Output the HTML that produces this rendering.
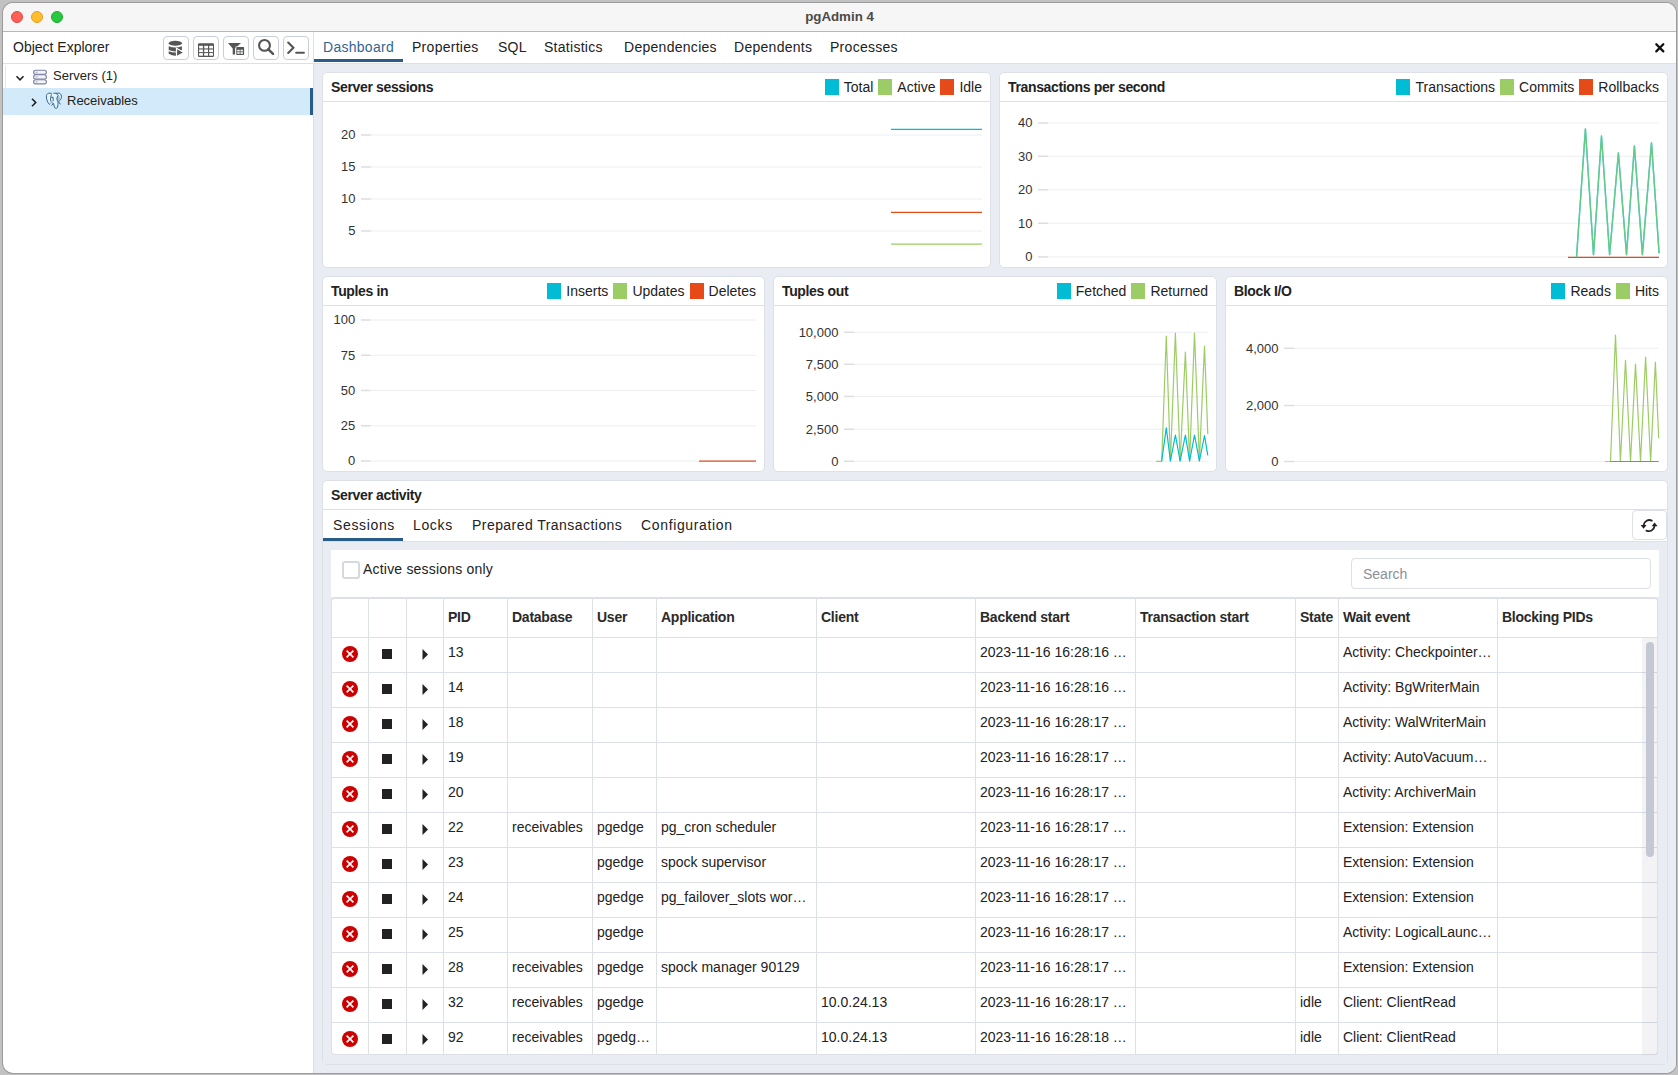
<!DOCTYPE html><html><head><meta charset="utf-8"><title>pgAdmin 4</title><style>
*{box-sizing:border-box;margin:0;padding:0}
html,body{width:1678px;height:1075px;overflow:hidden;background:#c2c2c2;font-family:"Liberation Sans",sans-serif;color:#222}
.a{position:absolute}
#win{position:absolute;left:3px;top:3px;width:1673px;height:1070px;border-radius:10px;overflow:hidden;background:#fff;box-shadow:0 0 0 1px rgba(0,0,0,0.2)}
#title{position:absolute;left:0;top:0;width:1673px;height:29px;background:#f6f6f6;border-bottom:1px solid #b4b7be}
.tl{position:absolute;top:7px;width:13px;height:13px;border-radius:50%}
#ttext{position:absolute;left:0;width:1673px;top:6px;text-align:center;font-weight:bold;font-size:13.5px;color:#4a4a4a;line-height:16px}
.t14{font-size:14px;line-height:16px;white-space:nowrap}
.tbtn{position:absolute;top:36px;width:26px;height:24px;border:1px solid #c8cdd8;border-radius:4px;background:#fff}
.card{position:absolute;background:#fff;border:1px solid #dde0e6;border-radius:5px;overflow:hidden}
.chead{position:absolute;left:0;top:0;right:0;height:29px;border-bottom:1px solid #dde0e6}
.ctitle{position:absolute;left:8px;top:6px;font-weight:bold;font-size:14px;line-height:16px;white-space:nowrap;letter-spacing:-0.35px}
.legend{position:absolute;right:8px;top:6px;height:16px;font-size:14px;line-height:16px;white-space:nowrap;display:flex}
.sw{width:14px;height:16px;margin-right:5px}
.lt{margin-right:5px}
.lt:last-child{margin-right:0}
.tab{position:absolute;font-size:14px;line-height:16px;white-space:nowrap;letter-spacing:0.15px}
.cell{position:absolute;font-size:14px;line-height:16px;white-space:nowrap}
.hd{font-weight:bold;letter-spacing:-0.25px;color:#2a2a2a}
</style></head><body>
<div id="win"><div class="a" style="left:-3px;top:-3px;width:1678px;height:1075px">
<div class="a" style="left:3px;top:3px;width:1673px;height:29px;background:#f6f6f6;border-bottom:1px solid #b4b7be"></div>
<div class="tl" style="left:11px;top:11px;width:12px;height:12px;background:#fe5f57;border:1px solid #e0443e"></div>
<div class="tl" style="left:31px;top:11px;width:12px;height:12px;background:#febc2e;border:1px solid #dea123"></div>
<div class="tl" style="left:51px;top:11px;width:12px;height:12px;background:#28c840;border:1px solid #1aab29"></div>
<div class="a" style="left:3px;width:1673px;top:9px;text-align:center;font-weight:bold;font-size:13.3px;color:#4a4a4a;line-height:16px">pgAdmin 4</div>
<div class="a" style="left:313px;top:32px;width:1px;height:1043px;background:#dde0e6"></div>
<div class="a" style="left:3px;top:63px;width:310px;height:1px;background:#dde0e6"></div>
<div class="a t14" style="left:13px;top:39px">Object Explorer</div>
<div class="tbtn" style="left:163px"></div>
<div class="tbtn" style="left:193px"></div>
<div class="tbtn" style="left:223px"></div>
<div class="tbtn" style="left:253px"></div>
<div class="tbtn" style="left:283px"></div>
<div class="a" style="left:5px;top:66px;width:1px;height:22px;background:#e3e5ea"></div>
<div class="a" style="left:3px;top:88px;width:310px;height:27px;background:#d2eafa"></div>
<div class="a" style="left:310px;top:88px;width:3px;height:27px;background:#2a5c8a"></div>
<div class="a" style="left:19px;top:90px;width:1px;height:24px;background:#e0e6ec"></div>
<div class="a t14" style="left:53px;top:68px;font-size:13px">Servers (1)</div>
<div class="a t14" style="left:67px;top:93px;font-size:13px">Receivables</div>
<div class="a" style="left:314px;top:63px;width:1362px;height:1px;background:#dde0e6"></div>
<div class="tab" style="left:323px;top:39px;color:#326690;letter-spacing:0.28px">Dashboard</div>
<div class="tab" style="left:412px;top:39px;color:#222;letter-spacing:0.28px">Properties</div>
<div class="tab" style="left:498px;top:39px;color:#222;letter-spacing:0.28px">SQL</div>
<div class="tab" style="left:544px;top:39px;color:#222;letter-spacing:0.28px">Statistics</div>
<div class="tab" style="left:624px;top:39px;color:#222;letter-spacing:0.28px">Dependencies</div>
<div class="tab" style="left:734px;top:39px;color:#222;letter-spacing:0.28px">Dependents</div>
<div class="tab" style="left:830px;top:39px;color:#222;letter-spacing:0.28px">Processes</div>
<div class="a" style="left:314px;top:59px;width:89px;height:3px;background:#2a5c8a"></div>
<div class="a" style="left:314px;top:64px;width:1362px;height:1011px;background:#e9ecf2"></div>
<div class="card" style="left:322px;top:72px;width:669px;height:196px">
<div class="chead"><div class="ctitle">Server sessions</div>
<div class="legend">
<span class="sw" style="background:#00bcd4"></span><span class="lt">Total</span>
<span class="sw" style="background:#9ccc65"></span><span class="lt">Active</span>
<span class="sw" style="background:#e64a19"></span><span class="lt">Idle</span>
</div>
</div></div>
<div class="card" style="left:999px;top:72px;width:669px;height:196px">
<div class="chead"><div class="ctitle">Transactions per second</div>
<div class="legend">
<span class="sw" style="background:#00bcd4"></span><span class="lt">Transactions</span>
<span class="sw" style="background:#9ccc65"></span><span class="lt">Commits</span>
<span class="sw" style="background:#e64a19"></span><span class="lt">Rollbacks</span>
</div>
</div></div>
<div class="card" style="left:322px;top:276px;width:443px;height:196px">
<div class="chead"><div class="ctitle">Tuples in</div>
<div class="legend">
<span class="sw" style="background:#00bcd4"></span><span class="lt">Inserts</span>
<span class="sw" style="background:#9ccc65"></span><span class="lt">Updates</span>
<span class="sw" style="background:#e64a19"></span><span class="lt">Deletes</span>
</div>
</div></div>
<div class="card" style="left:773px;top:276px;width:444px;height:196px">
<div class="chead"><div class="ctitle">Tuples out</div>
<div class="legend">
<span class="sw" style="background:#00bcd4"></span><span class="lt">Fetched</span>
<span class="sw" style="background:#9ccc65"></span><span class="lt">Returned</span>
</div>
</div></div>
<div class="card" style="left:1225px;top:276px;width:443px;height:196px">
<div class="chead"><div class="ctitle">Block I/O</div>
<div class="legend">
<span class="sw" style="background:#00bcd4"></span><span class="lt">Reads</span>
<span class="sw" style="background:#9ccc65"></span><span class="lt">Hits</span>
</div>
</div></div>
<div class="card" style="left:322px;top:480px;width:1346px;height:585px">
<div class="chead"><div class="ctitle">Server activity</div>
</div></div>
<div class="a" style="left:323px;top:510px;width:1344px;height:32px;background:#fff;border-bottom:1px solid #dde0e6"></div>
<div class="a" style="left:323px;top:542px;width:1344px;height:522px;background:#e9ecf2"></div>
<div class="tab" style="left:333px;top:517px;letter-spacing:0.65px">Sessions</div>
<div class="tab" style="left:413px;top:517px;letter-spacing:0.65px">Locks</div>
<div class="tab" style="left:472px;top:517px;letter-spacing:0.45px">Prepared Transactions</div>
<div class="tab" style="left:641px;top:517px;letter-spacing:0.65px">Configuration</div>
<div class="a" style="left:323px;top:538px;width:80px;height:3px;background:#2a5c8a"></div>
<div class="a" style="left:1632px;top:510px;width:35px;height:30px;border:1px solid #dde0e6;border-radius:4px;background:#fff"></div>
<div class="a" style="left:331px;top:550px;width:1328px;height:47px;background:#fff"></div>
<div class="a" style="left:342px;top:561px;width:18px;height:18px;border:2px solid #d4d8df;border-radius:3px"></div>
<div class="a t14" style="left:363px;top:561px;letter-spacing:0.2px">Active sessions only</div>
<div class="a" style="left:1351px;top:558px;width:300px;height:31px;border:1px solid #dde0e6;border-radius:4px;background:#fff"></div>
<div class="a t14" style="left:1363px;top:566px;color:#8a8f99">Search</div>
<div class="a" style="left:331px;top:597px;width:1327px;height:458px;border:1px solid #dde0e6;border-top:2px solid #dde0e6;border-radius:4px 4px 4px 4px;overflow:hidden;background:#fff">
</div>
<div class="a" style="left:368px;top:598px;width:1px;height:457px;background:#dde0e6"></div>
<div class="a" style="left:406px;top:598px;width:1px;height:457px;background:#dde0e6"></div>
<div class="a" style="left:443px;top:598px;width:1px;height:457px;background:#dde0e6"></div>
<div class="a" style="left:507px;top:598px;width:1px;height:457px;background:#dde0e6"></div>
<div class="a" style="left:592px;top:598px;width:1px;height:457px;background:#dde0e6"></div>
<div class="a" style="left:656px;top:598px;width:1px;height:457px;background:#dde0e6"></div>
<div class="a" style="left:816px;top:598px;width:1px;height:457px;background:#dde0e6"></div>
<div class="a" style="left:975px;top:598px;width:1px;height:457px;background:#dde0e6"></div>
<div class="a" style="left:1135px;top:598px;width:1px;height:457px;background:#dde0e6"></div>
<div class="a" style="left:1295px;top:598px;width:1px;height:457px;background:#dde0e6"></div>
<div class="a" style="left:1338px;top:598px;width:1px;height:457px;background:#dde0e6"></div>
<div class="a" style="left:1497px;top:598px;width:1px;height:457px;background:#dde0e6"></div>
<div class="a" style="left:332px;top:637px;width:1325px;height:1px;background:#dde0e6"></div>
<div class="a" style="left:332px;top:672px;width:1325px;height:1px;background:#dde0e6"></div>
<div class="a" style="left:332px;top:707px;width:1325px;height:1px;background:#dde0e6"></div>
<div class="a" style="left:332px;top:742px;width:1325px;height:1px;background:#dde0e6"></div>
<div class="a" style="left:332px;top:777px;width:1325px;height:1px;background:#dde0e6"></div>
<div class="a" style="left:332px;top:812px;width:1325px;height:1px;background:#dde0e6"></div>
<div class="a" style="left:332px;top:847px;width:1325px;height:1px;background:#dde0e6"></div>
<div class="a" style="left:332px;top:882px;width:1325px;height:1px;background:#dde0e6"></div>
<div class="a" style="left:332px;top:917px;width:1325px;height:1px;background:#dde0e6"></div>
<div class="a" style="left:332px;top:952px;width:1325px;height:1px;background:#dde0e6"></div>
<div class="a" style="left:332px;top:987px;width:1325px;height:1px;background:#dde0e6"></div>
<div class="a" style="left:332px;top:1022px;width:1325px;height:1px;background:#dde0e6"></div>
<div class="cell hd" style="left:448px;top:609px">PID</div>
<div class="cell hd" style="left:512px;top:609px">Database</div>
<div class="cell hd" style="left:597px;top:609px">User</div>
<div class="cell hd" style="left:661px;top:609px">Application</div>
<div class="cell hd" style="left:821px;top:609px">Client</div>
<div class="cell hd" style="left:980px;top:609px">Backend start</div>
<div class="cell hd" style="left:1140px;top:609px">Transaction start</div>
<div class="cell hd" style="left:1300px;top:609px">State</div>
<div class="cell hd" style="left:1343px;top:609px">Wait event</div>
<div class="cell hd" style="left:1502px;top:609px">Blocking PIDs</div>
<div class="a" style="left:342px;top:646px;width:16px;height:16px;border-radius:50%;background:#cc0000"></div>
<svg class="a" style="left:342px;top:646px" width="16" height="16"><path d="M4.6 4.6L11.4 11.4M11.4 4.6L4.6 11.4" stroke="#fff" stroke-width="1.6"/></svg>
<div class="a" style="left:382px;top:649px;width:10px;height:10px;background:#222"></div>
<svg class="a" style="left:422px;top:649px" width="7" height="11"><path d="M0.5 0L6 5.5L0.5 11Z" fill="#222"/></svg>
<div class="cell" style="left:448px;top:644px">13</div>
<div class="cell" style="left:980px;top:644px">2023-11-16 16:28:16 …</div>
<div class="cell" style="left:1343px;top:644px">Activity: Checkpointer…</div>
<div class="a" style="left:342px;top:681px;width:16px;height:16px;border-radius:50%;background:#cc0000"></div>
<svg class="a" style="left:342px;top:681px" width="16" height="16"><path d="M4.6 4.6L11.4 11.4M11.4 4.6L4.6 11.4" stroke="#fff" stroke-width="1.6"/></svg>
<div class="a" style="left:382px;top:684px;width:10px;height:10px;background:#222"></div>
<svg class="a" style="left:422px;top:684px" width="7" height="11"><path d="M0.5 0L6 5.5L0.5 11Z" fill="#222"/></svg>
<div class="cell" style="left:448px;top:679px">14</div>
<div class="cell" style="left:980px;top:679px">2023-11-16 16:28:16 …</div>
<div class="cell" style="left:1343px;top:679px">Activity: BgWriterMain</div>
<div class="a" style="left:342px;top:716px;width:16px;height:16px;border-radius:50%;background:#cc0000"></div>
<svg class="a" style="left:342px;top:716px" width="16" height="16"><path d="M4.6 4.6L11.4 11.4M11.4 4.6L4.6 11.4" stroke="#fff" stroke-width="1.6"/></svg>
<div class="a" style="left:382px;top:719px;width:10px;height:10px;background:#222"></div>
<svg class="a" style="left:422px;top:719px" width="7" height="11"><path d="M0.5 0L6 5.5L0.5 11Z" fill="#222"/></svg>
<div class="cell" style="left:448px;top:714px">18</div>
<div class="cell" style="left:980px;top:714px">2023-11-16 16:28:17 …</div>
<div class="cell" style="left:1343px;top:714px">Activity: WalWriterMain</div>
<div class="a" style="left:342px;top:751px;width:16px;height:16px;border-radius:50%;background:#cc0000"></div>
<svg class="a" style="left:342px;top:751px" width="16" height="16"><path d="M4.6 4.6L11.4 11.4M11.4 4.6L4.6 11.4" stroke="#fff" stroke-width="1.6"/></svg>
<div class="a" style="left:382px;top:754px;width:10px;height:10px;background:#222"></div>
<svg class="a" style="left:422px;top:754px" width="7" height="11"><path d="M0.5 0L6 5.5L0.5 11Z" fill="#222"/></svg>
<div class="cell" style="left:448px;top:749px">19</div>
<div class="cell" style="left:980px;top:749px">2023-11-16 16:28:17 …</div>
<div class="cell" style="left:1343px;top:749px">Activity: AutoVacuum…</div>
<div class="a" style="left:342px;top:786px;width:16px;height:16px;border-radius:50%;background:#cc0000"></div>
<svg class="a" style="left:342px;top:786px" width="16" height="16"><path d="M4.6 4.6L11.4 11.4M11.4 4.6L4.6 11.4" stroke="#fff" stroke-width="1.6"/></svg>
<div class="a" style="left:382px;top:789px;width:10px;height:10px;background:#222"></div>
<svg class="a" style="left:422px;top:789px" width="7" height="11"><path d="M0.5 0L6 5.5L0.5 11Z" fill="#222"/></svg>
<div class="cell" style="left:448px;top:784px">20</div>
<div class="cell" style="left:980px;top:784px">2023-11-16 16:28:17 …</div>
<div class="cell" style="left:1343px;top:784px">Activity: ArchiverMain</div>
<div class="a" style="left:342px;top:821px;width:16px;height:16px;border-radius:50%;background:#cc0000"></div>
<svg class="a" style="left:342px;top:821px" width="16" height="16"><path d="M4.6 4.6L11.4 11.4M11.4 4.6L4.6 11.4" stroke="#fff" stroke-width="1.6"/></svg>
<div class="a" style="left:382px;top:824px;width:10px;height:10px;background:#222"></div>
<svg class="a" style="left:422px;top:824px" width="7" height="11"><path d="M0.5 0L6 5.5L0.5 11Z" fill="#222"/></svg>
<div class="cell" style="left:448px;top:819px">22</div>
<div class="cell" style="left:512px;top:819px">receivables</div>
<div class="cell" style="left:597px;top:819px">pgedge</div>
<div class="cell" style="left:661px;top:819px">pg_cron scheduler</div>
<div class="cell" style="left:980px;top:819px">2023-11-16 16:28:17 …</div>
<div class="cell" style="left:1343px;top:819px">Extension: Extension</div>
<div class="a" style="left:342px;top:856px;width:16px;height:16px;border-radius:50%;background:#cc0000"></div>
<svg class="a" style="left:342px;top:856px" width="16" height="16"><path d="M4.6 4.6L11.4 11.4M11.4 4.6L4.6 11.4" stroke="#fff" stroke-width="1.6"/></svg>
<div class="a" style="left:382px;top:859px;width:10px;height:10px;background:#222"></div>
<svg class="a" style="left:422px;top:859px" width="7" height="11"><path d="M0.5 0L6 5.5L0.5 11Z" fill="#222"/></svg>
<div class="cell" style="left:448px;top:854px">23</div>
<div class="cell" style="left:597px;top:854px">pgedge</div>
<div class="cell" style="left:661px;top:854px">spock supervisor</div>
<div class="cell" style="left:980px;top:854px">2023-11-16 16:28:17 …</div>
<div class="cell" style="left:1343px;top:854px">Extension: Extension</div>
<div class="a" style="left:342px;top:891px;width:16px;height:16px;border-radius:50%;background:#cc0000"></div>
<svg class="a" style="left:342px;top:891px" width="16" height="16"><path d="M4.6 4.6L11.4 11.4M11.4 4.6L4.6 11.4" stroke="#fff" stroke-width="1.6"/></svg>
<div class="a" style="left:382px;top:894px;width:10px;height:10px;background:#222"></div>
<svg class="a" style="left:422px;top:894px" width="7" height="11"><path d="M0.5 0L6 5.5L0.5 11Z" fill="#222"/></svg>
<div class="cell" style="left:448px;top:889px">24</div>
<div class="cell" style="left:597px;top:889px">pgedge</div>
<div class="cell" style="left:661px;top:889px">pg_failover_slots wor…</div>
<div class="cell" style="left:980px;top:889px">2023-11-16 16:28:17 …</div>
<div class="cell" style="left:1343px;top:889px">Extension: Extension</div>
<div class="a" style="left:342px;top:926px;width:16px;height:16px;border-radius:50%;background:#cc0000"></div>
<svg class="a" style="left:342px;top:926px" width="16" height="16"><path d="M4.6 4.6L11.4 11.4M11.4 4.6L4.6 11.4" stroke="#fff" stroke-width="1.6"/></svg>
<div class="a" style="left:382px;top:929px;width:10px;height:10px;background:#222"></div>
<svg class="a" style="left:422px;top:929px" width="7" height="11"><path d="M0.5 0L6 5.5L0.5 11Z" fill="#222"/></svg>
<div class="cell" style="left:448px;top:924px">25</div>
<div class="cell" style="left:597px;top:924px">pgedge</div>
<div class="cell" style="left:980px;top:924px">2023-11-16 16:28:17 …</div>
<div class="cell" style="left:1343px;top:924px">Activity: LogicalLaunc…</div>
<div class="a" style="left:342px;top:961px;width:16px;height:16px;border-radius:50%;background:#cc0000"></div>
<svg class="a" style="left:342px;top:961px" width="16" height="16"><path d="M4.6 4.6L11.4 11.4M11.4 4.6L4.6 11.4" stroke="#fff" stroke-width="1.6"/></svg>
<div class="a" style="left:382px;top:964px;width:10px;height:10px;background:#222"></div>
<svg class="a" style="left:422px;top:964px" width="7" height="11"><path d="M0.5 0L6 5.5L0.5 11Z" fill="#222"/></svg>
<div class="cell" style="left:448px;top:959px">28</div>
<div class="cell" style="left:512px;top:959px">receivables</div>
<div class="cell" style="left:597px;top:959px">pgedge</div>
<div class="cell" style="left:661px;top:959px">spock manager 90129</div>
<div class="cell" style="left:980px;top:959px">2023-11-16 16:28:17 …</div>
<div class="cell" style="left:1343px;top:959px">Extension: Extension</div>
<div class="a" style="left:342px;top:996px;width:16px;height:16px;border-radius:50%;background:#cc0000"></div>
<svg class="a" style="left:342px;top:996px" width="16" height="16"><path d="M4.6 4.6L11.4 11.4M11.4 4.6L4.6 11.4" stroke="#fff" stroke-width="1.6"/></svg>
<div class="a" style="left:382px;top:999px;width:10px;height:10px;background:#222"></div>
<svg class="a" style="left:422px;top:999px" width="7" height="11"><path d="M0.5 0L6 5.5L0.5 11Z" fill="#222"/></svg>
<div class="cell" style="left:448px;top:994px">32</div>
<div class="cell" style="left:512px;top:994px">receivables</div>
<div class="cell" style="left:597px;top:994px">pgedge</div>
<div class="cell" style="left:821px;top:994px">10.0.24.13</div>
<div class="cell" style="left:980px;top:994px">2023-11-16 16:28:17 …</div>
<div class="cell" style="left:1300px;top:994px">idle</div>
<div class="cell" style="left:1343px;top:994px">Client: ClientRead</div>
<div class="a" style="left:342px;top:1031px;width:16px;height:16px;border-radius:50%;background:#cc0000"></div>
<svg class="a" style="left:342px;top:1031px" width="16" height="16"><path d="M4.6 4.6L11.4 11.4M11.4 4.6L4.6 11.4" stroke="#fff" stroke-width="1.6"/></svg>
<div class="a" style="left:382px;top:1034px;width:10px;height:10px;background:#222"></div>
<svg class="a" style="left:422px;top:1034px" width="7" height="11"><path d="M0.5 0L6 5.5L0.5 11Z" fill="#222"/></svg>
<div class="cell" style="left:448px;top:1029px">92</div>
<div class="cell" style="left:512px;top:1029px">receivables</div>
<div class="cell" style="left:597px;top:1029px">pgedg…</div>
<div class="cell" style="left:821px;top:1029px">10.0.24.13</div>
<div class="cell" style="left:980px;top:1029px">2023-11-16 16:28:18 …</div>
<div class="cell" style="left:1300px;top:1029px">idle</div>
<div class="cell" style="left:1343px;top:1029px">Client: ClientRead</div>
<div class="a" style="left:1642px;top:638px;width:15px;height:417px;background:rgba(90,100,120,0.075)"></div>
<div class="a" style="left:1646px;top:642px;width:8px;height:215px;border-radius:4px;background:#c4c8d3"></div>
<svg class="a" style="left:0;top:0" width="1678" height="1075" viewBox="0 0 1678 1075"><ellipse cx="175.3" cy="43.3" rx="6.6" ry="2.5" fill="#555"/><path d="M168.7,46.3 Q175.3,48.9 181.9,46.3 L181.9,50.1 Q175.3,52.7 168.7,50.1 Z" fill="#555"/><path d="M168.7,51.3 Q175.3,53.9 181.9,51.3 L181.9,53.8 Q175.3,57.6 168.7,53.8 Z" fill="#555"/><path d="M176.5,48.2 L183.8,52.5 L176.5,56.8 Z" fill="#555" stroke="#fff" stroke-width="1.2"/><rect x="198" y="43.2" width="16" height="13.8" rx="1.3" fill="#555"/><rect x="199.1" y="45.8" width="3.8" height="2.6" fill="#fff"/><rect x="199.1" y="49.5" width="3.8" height="2.6" fill="#fff"/><rect x="199.1" y="53.1" width="3.8" height="2.6" fill="#fff"/><rect x="204.2" y="45.8" width="3.8" height="2.6" fill="#fff"/><rect x="204.2" y="49.5" width="3.8" height="2.6" fill="#fff"/><rect x="204.2" y="53.1" width="3.8" height="2.6" fill="#fff"/><rect x="209.2" y="45.8" width="3.8" height="2.6" fill="#fff"/><rect x="209.2" y="49.5" width="3.8" height="2.6" fill="#fff"/><rect x="209.2" y="53.1" width="3.8" height="2.6" fill="#fff"/><path d="M228,43 L241,43 L235.1,48.6 L235.1,54.6 L232.7,54.6 L232.7,48.6 Z" fill="#555"/><rect x="235.6" y="46.5" width="9" height="9" fill="#fff"/><rect x="236.3" y="47" width="7.8" height="8" rx="0.8" fill="#555"/><rect x="237.3" y="49.8" width="2.4" height="1.6" fill="#fff"/><rect x="237.3" y="52.2" width="2.4" height="1.6" fill="#fff"/><rect x="240.5" y="49.8" width="2.4" height="1.6" fill="#fff"/><rect x="240.5" y="52.2" width="2.4" height="1.6" fill="#fff"/><circle cx="264.5" cy="45.4" r="5.4" fill="none" stroke="#555" stroke-width="2.1"/><path d="M268.4,49.3 L273,53.9" stroke="#555" stroke-width="2.5" stroke-linecap="round"/><path d="M288.2,42.6 L293.4,47.8 L288.2,53" fill="none" stroke="#555" stroke-width="2.1" stroke-linecap="round"/><path d="M296.2,52.8 L303.9,52.8" stroke="#555" stroke-width="2.1" stroke-linecap="round"/><path d="M1656.3,44.2 L1663.3,51.4 M1663.3,44.2 L1656.3,51.4" stroke="#111" stroke-width="2.3" stroke-linecap="round"/><path d="M16.5,76.3 L20,79.8 L23.5,76.3" fill="none" stroke="#222" stroke-width="1.6"/><path d="M32,98.8 L35.7,102.5 L32,106.2" fill="none" stroke="#222" stroke-width="1.6"/><rect x="33.6" y="70.2" width="12.8" height="4.2" rx="2.1" fill="#f4f4f6" stroke="#7c80a8" stroke-width="1.1"/><path d="M35.6,72.3 L37.6,72.3" stroke="#9a9cb8" stroke-width="0.9"/><rect x="33.6" y="74.8" width="12.8" height="4.2" rx="2.1" fill="#f4f4f6" stroke="#7c80a8" stroke-width="1.1"/><path d="M35.6,76.9 L37.6,76.9" stroke="#9a9cb8" stroke-width="0.9"/><rect x="33.6" y="79.7" width="12.8" height="4.2" rx="2.1" fill="#f4f4f6" stroke="#7c80a8" stroke-width="1.1"/><path d="M35.6,81.8 L37.6,81.8" stroke="#9a9cb8" stroke-width="0.9"/><path d="M48.7,93.2 L59.4,93.2 C61,93.8 61.6,95.5 61.5,97.5 C61.3,99 60,100.2 58.5,101.8 L58.1,102.2 C58,103.8 57.9,105.5 57.5,107.3 C57,108.5 55.8,108.8 55,108 C54.2,107 54,105.5 53.7,103.7 L50.5,103.3 L49.4,104.4 C47.4,102 46.5,99.5 46.4,97 C46.3,95 47,93.6 48.7,93.2 Z" fill="#e3f4fd" stroke="none"/><path d="M48.7,93.2 C47,93.6 46.3,95 46.4,97 C46.5,99.5 47.4,102 49.4,104.4 L50.5,103.3 M48.7,93.2 L51.8,93.4 M53.3,93.2 L59.4,93.2 C61,93.8 61.6,95.5 61.5,97.5 C61.3,99 60,100.2 58.5,101.8 L60.6,104.4 M51.6,94.4 C50.8,96 50.4,98.5 50.6,100.3 C51,102 52.2,103 53.7,103.7 C54,105.5 54.2,107 55,108 C55.8,108.8 57,108.5 57.5,107.3 C57.9,105.5 58,103.8 58.1,102.2 M51.1,97.3 L53.2,97.3 L53.1,101.2 M55.7,93.6 C57,94 58,94.6 58.1,95.4 C57.6,96.6 56.8,97.8 56.8,98.8 C57,100 57.6,101 58.1,102.2 M51.4,105.5 L53.5,103.5" fill="none" stroke="#336791" stroke-width="1"/><path d="M58.1,95.4 C59.5,96.5 60.5,97.5 60.6,98.6 L58.3,101.6 C57.6,100.6 57,99.8 56.8,98.8 C57,97.6 57.6,96.6 58.1,95.4 Z" fill="#336791" opacity="0.35"/><path d="M1651.8,520.6 C1648.4,519 1644.2,520.8 1643.6,525.4" fill="none" stroke="#222" stroke-width="1.8" stroke-linecap="round"/><path d="M1640.6,524.9 L1646.6,524.9 L1643.6,528.7 Z" fill="#222"/><path d="M1646.4,530.6 C1649.8,532.2 1654,530.4 1654.6,525.8" fill="none" stroke="#222" stroke-width="1.8" stroke-linecap="round"/><path d="M1651.6,526.3 L1657.6,526.3 L1654.6,522.5 Z" fill="#222"/></svg>
<svg class="a" style="left:0;top:0" width="1678" height="1075" viewBox="0 0 1678 1075" font-family="Liberation Sans, sans-serif"><line x1="371" y1="135" x2="982" y2="135" stroke="#eceef2" stroke-width="1"/><line x1="361" y1="135" x2="371" y2="135" stroke="#dedede" stroke-width="1.5"/><text x="355.5" y="139.4" text-anchor="end" font-size="13" fill="#333">20</text><line x1="371" y1="167" x2="982" y2="167" stroke="#eceef2" stroke-width="1"/><line x1="361" y1="167" x2="371" y2="167" stroke="#dedede" stroke-width="1.5"/><text x="355.5" y="171.4" text-anchor="end" font-size="13" fill="#333">15</text><line x1="371" y1="199" x2="982" y2="199" stroke="#eceef2" stroke-width="1"/><line x1="361" y1="199" x2="371" y2="199" stroke="#dedede" stroke-width="1.5"/><text x="355.5" y="203.4" text-anchor="end" font-size="13" fill="#333">10</text><line x1="371" y1="231" x2="982" y2="231" stroke="#eceef2" stroke-width="1"/><line x1="361" y1="231" x2="371" y2="231" stroke="#dedede" stroke-width="1.5"/><text x="355.5" y="235.4" text-anchor="end" font-size="13" fill="#333">5</text><polyline fill="none" stroke="#00bcd4" stroke-width="1.2" stroke-opacity="1" stroke-linejoin="round" points="891.0,129.3 982.0,129.3"/><polyline fill="none" stroke="#e64a19" stroke-width="1.2" stroke-opacity="1" stroke-linejoin="round" points="891.0,212.3 982.0,212.3"/><polyline fill="none" stroke="#9ccc65" stroke-width="1.2" stroke-opacity="1" stroke-linejoin="round" points="891.0,244.1 982.0,244.1"/><line x1="1048" y1="122.9" x2="1659" y2="122.9" stroke="#eceef2" stroke-width="1"/><line x1="1038" y1="122.9" x2="1048" y2="122.9" stroke="#dedede" stroke-width="1.5"/><text x="1032.5" y="127.30000000000001" text-anchor="end" font-size="13" fill="#333">40</text><line x1="1048" y1="156.3" x2="1659" y2="156.3" stroke="#eceef2" stroke-width="1"/><line x1="1038" y1="156.3" x2="1048" y2="156.3" stroke="#dedede" stroke-width="1.5"/><text x="1032.5" y="160.70000000000002" text-anchor="end" font-size="13" fill="#333">30</text><line x1="1048" y1="189.8" x2="1659" y2="189.8" stroke="#eceef2" stroke-width="1"/><line x1="1038" y1="189.8" x2="1048" y2="189.8" stroke="#dedede" stroke-width="1.5"/><text x="1032.5" y="194.20000000000002" text-anchor="end" font-size="13" fill="#333">20</text><line x1="1048" y1="223.2" x2="1659" y2="223.2" stroke="#eceef2" stroke-width="1"/><line x1="1038" y1="223.2" x2="1048" y2="223.2" stroke="#dedede" stroke-width="1.5"/><text x="1032.5" y="227.6" text-anchor="end" font-size="13" fill="#333">10</text><line x1="1048" y1="256.9" x2="1659" y2="256.9" stroke="#eceef2" stroke-width="1"/><line x1="1038" y1="256.9" x2="1048" y2="256.9" stroke="#dedede" stroke-width="1.5"/><text x="1032.5" y="261.29999999999995" text-anchor="end" font-size="13" fill="#333">0</text><polyline fill="none" stroke="#e64a19" stroke-width="1.2" stroke-opacity="1" stroke-linejoin="round" points="1568.0,257.4 1659.0,257.4"/><polyline fill="none" stroke="#00bcd4" stroke-width="1.4" stroke-opacity="1" stroke-linejoin="round" points="1576.5,257.4 1585.4,129.0 1593.5,254.6 1601.5,136.0 1609.6,254.6 1618.4,153.0 1626.5,254.6 1634.4,146.0 1642.4,254.6 1651.5,142.9 1659.1,253.2"/><polyline fill="none" stroke="#8fd06a" stroke-width="1.4" stroke-opacity="0.7" stroke-linejoin="round" points="1576.5,257.4 1585.4,129.0 1593.5,254.6 1601.5,136.0 1609.6,254.6 1618.4,153.0 1626.5,254.6 1634.4,146.0 1642.4,254.6 1651.5,142.9 1659.1,253.2"/><line x1="370.5" y1="320" x2="756" y2="320" stroke="#eceef2" stroke-width="1"/><line x1="361" y1="320" x2="370.5" y2="320" stroke="#dedede" stroke-width="1.5"/><text x="355.3" y="324.4" text-anchor="end" font-size="13" fill="#333">100</text><line x1="370.5" y1="355.3" x2="756" y2="355.3" stroke="#eceef2" stroke-width="1"/><line x1="361" y1="355.3" x2="370.5" y2="355.3" stroke="#dedede" stroke-width="1.5"/><text x="355.3" y="359.7" text-anchor="end" font-size="13" fill="#333">75</text><line x1="370.5" y1="390.5" x2="756" y2="390.5" stroke="#eceef2" stroke-width="1"/><line x1="361" y1="390.5" x2="370.5" y2="390.5" stroke="#dedede" stroke-width="1.5"/><text x="355.3" y="394.9" text-anchor="end" font-size="13" fill="#333">50</text><line x1="370.5" y1="425.8" x2="756" y2="425.8" stroke="#eceef2" stroke-width="1"/><line x1="361" y1="425.8" x2="370.5" y2="425.8" stroke="#dedede" stroke-width="1.5"/><text x="355.3" y="430.2" text-anchor="end" font-size="13" fill="#333">25</text><line x1="370.5" y1="461" x2="756" y2="461" stroke="#eceef2" stroke-width="1"/><line x1="361" y1="461" x2="370.5" y2="461" stroke="#dedede" stroke-width="1.5"/><text x="355.3" y="465.4" text-anchor="end" font-size="13" fill="#333">0</text><polyline fill="none" stroke="#e64a19" stroke-width="1.2" stroke-opacity="1" stroke-linejoin="round" points="699.0,461.2 756.0,461.2"/><line x1="854" y1="332.3" x2="1208" y2="332.3" stroke="#eceef2" stroke-width="1"/><line x1="844" y1="332.3" x2="854" y2="332.3" stroke="#dedede" stroke-width="1.5"/><text x="838.4" y="336.7" text-anchor="end" font-size="13" fill="#333">10,000</text><line x1="854" y1="364.3" x2="1208" y2="364.3" stroke="#eceef2" stroke-width="1"/><line x1="844" y1="364.3" x2="854" y2="364.3" stroke="#dedede" stroke-width="1.5"/><text x="838.4" y="368.7" text-anchor="end" font-size="13" fill="#333">7,500</text><line x1="854" y1="396.4" x2="1208" y2="396.4" stroke="#eceef2" stroke-width="1"/><line x1="844" y1="396.4" x2="854" y2="396.4" stroke="#dedede" stroke-width="1.5"/><text x="838.4" y="400.79999999999995" text-anchor="end" font-size="13" fill="#333">5,000</text><line x1="854" y1="429.2" x2="1208" y2="429.2" stroke="#eceef2" stroke-width="1"/><line x1="844" y1="429.2" x2="854" y2="429.2" stroke="#dedede" stroke-width="1.5"/><text x="838.4" y="433.59999999999997" text-anchor="end" font-size="13" fill="#333">2,500</text><line x1="854" y1="461.3" x2="1208" y2="461.3" stroke="#eceef2" stroke-width="1"/><line x1="844" y1="461.3" x2="854" y2="461.3" stroke="#dedede" stroke-width="1.5"/><text x="838.4" y="465.7" text-anchor="end" font-size="13" fill="#333">0</text><polyline fill="none" stroke="#9ccc65" stroke-width="1.2" stroke-opacity="1" stroke-linejoin="round" points="1156.2,461.3 1161.7,461.3 1166.3,336.0 1170.4,461.0 1175.4,333.2 1180.1,461.0 1185.4,352.1 1189.6,461.0 1194.5,333.2 1199.4,461.0 1204.5,346.1 1207.8,434.3"/><polyline fill="none" stroke="#00bcd4" stroke-width="1.2" stroke-opacity="1" stroke-linejoin="round" points="1161.7,461.0 1166.3,427.8 1170.4,461.0 1175.4,435.0 1180.1,461.0 1185.4,435.0 1189.6,461.0 1194.5,435.0 1199.4,461.0 1204.5,435.5 1207.8,455.3"/><line x1="1294" y1="348.3" x2="1659" y2="348.3" stroke="#eceef2" stroke-width="1"/><line x1="1284" y1="348.3" x2="1294" y2="348.3" stroke="#dedede" stroke-width="1.5"/><text x="1278.5" y="352.7" text-anchor="end" font-size="13" fill="#333">4,000</text><line x1="1294" y1="405.5" x2="1659" y2="405.5" stroke="#eceef2" stroke-width="1"/><line x1="1284" y1="405.5" x2="1294" y2="405.5" stroke="#dedede" stroke-width="1.5"/><text x="1278.5" y="409.9" text-anchor="end" font-size="13" fill="#333">2,000</text><line x1="1294" y1="461.5" x2="1659" y2="461.5" stroke="#eceef2" stroke-width="1"/><line x1="1284" y1="461.5" x2="1294" y2="461.5" stroke="#dedede" stroke-width="1.5"/><text x="1278.5" y="465.9" text-anchor="end" font-size="13" fill="#333">0</text><polyline fill="none" stroke="#9ccc65" stroke-width="1.2" stroke-opacity="1" stroke-linejoin="round" points="1605.1,461.5 1610.5,461.5 1615.5,335.1 1620.4,461.5 1625.5,360.3 1630.5,461.5 1635.5,364.1 1640.5,461.5 1645.6,357.1 1650.6,461.5 1655.4,362.1 1658.7,438.3"/><polyline fill="none" stroke="#00bcd4" stroke-width="1.2" stroke-opacity="1" stroke-linejoin="round" points="1610.5,461.5 1658.7,461.5"/></svg>
</div></div></body></html>
